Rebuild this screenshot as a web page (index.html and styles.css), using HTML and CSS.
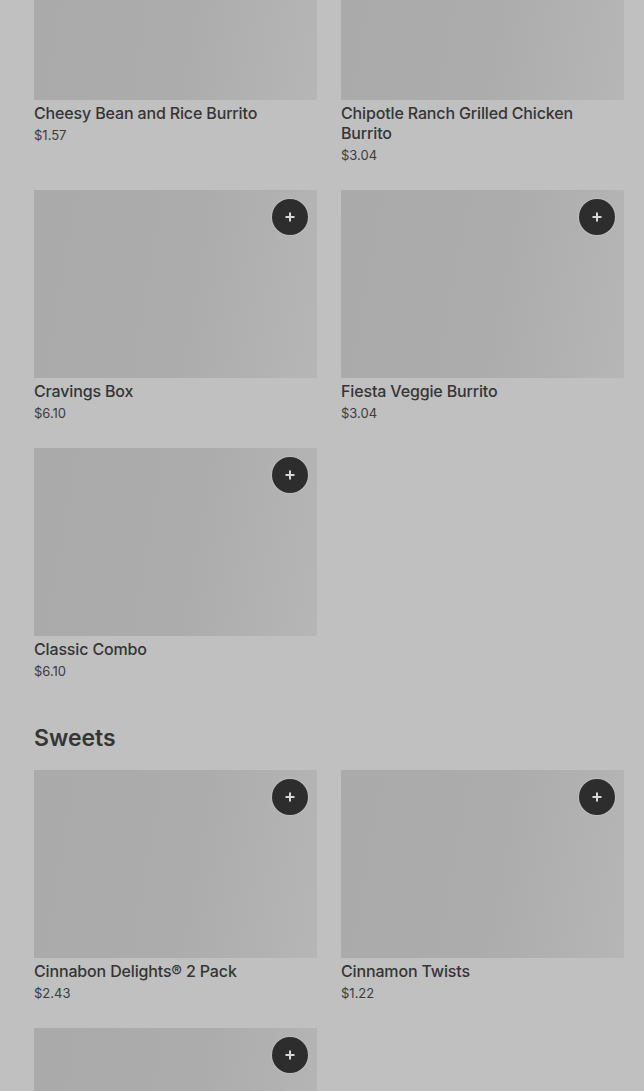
FILE: index.html
```html
<!DOCTYPE html>
<html lang="en">
<head>
    <meta charset="UTF-8">
    <meta name="viewport" content="width=device-width, initial-scale=1.0">
    <title>Menu</title>
    <link rel="stylesheet" href="styles.css">
</head>
<body>
    <div class="menu">
        <section class="category">
            <div class="item-grid">
                <div class="item">
                    <div class="item-image"></div>
                    <div class="item-name">Cheesy Bean and Rice Burrito</div>
                    <div class="item-price">$1.57</div>
                </div>
                <div class="item">
                    <div class="item-image"></div>
                    <div class="item-name">Chipotle Ranch Grilled Chicken Burrito</div>
                    <div class="item-price">$3.04</div>
                </div>
                <div class="item">
                    <div class="item-image">
                        <button class="add-btn"><svg viewBox="0 0 12 12"><path d="M6 1.5v9M1.5 6h9"/></svg></button>
                    </div>
                    <div class="item-name">Cravings Box</div>
                    <div class="item-price">$6.10</div>
                </div>
                <div class="item">
                    <div class="item-image">
                        <button class="add-btn"><svg viewBox="0 0 12 12"><path d="M6 1.5v9M1.5 6h9"/></svg></button>
                    </div>
                    <div class="item-name">Fiesta Veggie Burrito</div>
                    <div class="item-price">$3.04</div>
                </div>
                <div class="item">
                    <div class="item-image">
                        <button class="add-btn"><svg viewBox="0 0 12 12"><path d="M6 1.5v9M1.5 6h9"/></svg></button>
                    </div>
                    <div class="item-name">Classic Combo</div>
                    <div class="item-price">$6.10</div>
                </div>
            </div>
        </section>

        <section class="category">
            <h2>Sweets</h2>
            <div class="item-grid">
                <div class="item">
                    <div class="item-image">
                        <button class="add-btn"><svg viewBox="0 0 12 12"><path d="M6 1.5v9M1.5 6h9"/></svg></button>
                    </div>
                    <div class="item-name">Cinnabon Delights® 2 Pack</div>
                    <div class="item-price">$2.43</div>
                </div>
                <div class="item">
                    <div class="item-image">
                        <button class="add-btn"><svg viewBox="0 0 12 12"><path d="M6 1.5v9M1.5 6h9"/></svg></button>
                    </div>
                    <div class="item-name">Cinnamon Twists</div>
                    <div class="item-price">$1.22</div>
                </div>
                <div class="item">
                    <div class="item-image">
                        <button class="add-btn"><svg viewBox="0 0 12 12"><path d="M6 1.5v9M1.5 6h9"/></svg></button>
                    </div>
                </div>
            </div>
        </section>
    </div>
</body>
</html>
```

FILE: styles.css
```css
* {
    margin: 0;
    padding: 0;
    box-sizing: border-box;
    font-family: Inter, "Noto Sans", sans-serif;
}

html, body {
    height: 100%;
    overflow: hidden;
}

body {
    background-color: #c0c0c0;
    color: #333;
}

.menu {
    padding: 0 20px 0 34px;
    margin-top: -88px;
}

/* Categories */
.category h2 {
    font-size: 23px;
    font-weight: 600;
    line-height: 32px;
    color: #353535;
    margin: 42px 0 16px;
}

.item-grid {
    display: grid;
    grid-template-columns: 1fr 1fr;
    column-gap: 24px;
    row-gap: 26px;
}

/* Menu items */
.item-image {
    position: relative;
    height: 188px;
    background: linear-gradient(100deg, #aaaaaa 0%, #acacac 55%, #b6b6b6 100%);
}

.item-name {
    font-size: 16px;
    font-weight: 500;
    line-height: 20px;
    letter-spacing: -0.15px;
    margin-top: 3px;
    color: #353535;
}

.item-price {
    font-size: 13px;
    line-height: 18px;
    margin-top: 3px;
    color: #3c3c3c;
}

.add-btn {
    position: absolute;
    top: 9px;
    right: 9px;
    width: 36px;
    height: 36px;
    border-radius: 50%;
    border: none;
    background-color: #2d2d2d;
    box-shadow: 0 0 0 1px rgba(255,255,255,0.15);
    display: flex;
    align-items: center;
    justify-content: center;
    cursor: pointer;
}

.add-btn svg {
    width: 12px;
    height: 12px;
    stroke: #d8d8d8;
    stroke-width: 2;
    fill: none;
}
```
